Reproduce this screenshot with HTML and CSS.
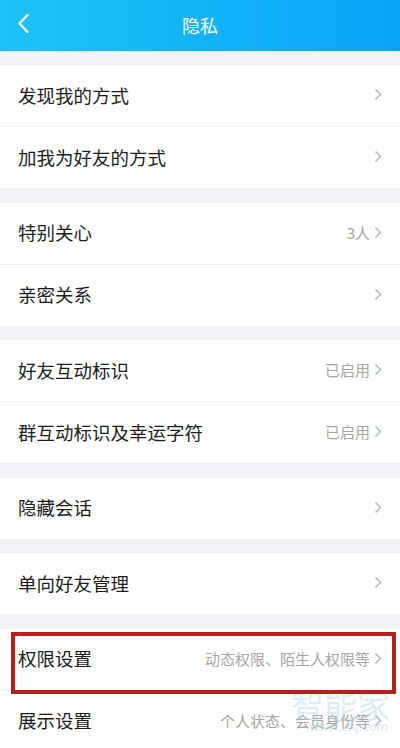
FILE: index.html
```html
<!DOCTYPE html>
<html lang="zh">
<head>
<meta charset="utf-8">
<link rel="stylesheet" href="styles.css">
</head>
<body>
<div class="page">
  <header class="topbar">
    <svg class="back" width="13" height="21" viewBox="0 0 13 21"><path d="M10.5 2 L2.5 10.5 L10.5 19" fill="none" stroke="#fff" stroke-width="2.2" stroke-linecap="round" stroke-linejoin="round"/></svg>
    <div class="title">隐私</div>
  </header>

  <section class="group first">
    <div class="row"><span class="label">发现我的方式</span><span class="right"><svg class="chev" width="8" height="13" viewBox="0 0 8 13"><path d="M1.5 1.5 L6.5 6.5 L1.5 11.5" fill="none" stroke="#b8b8b8" stroke-width="1.5"/></svg></span></div>
    <div class="row"><span class="label">加我为好友的方式</span><span class="right"><svg class="chev" width="8" height="13" viewBox="0 0 8 13"><path d="M1.5 1.5 L6.5 6.5 L1.5 11.5" fill="none" stroke="#b8b8b8" stroke-width="1.5"/></svg></span></div>
  </section>

  <section class="group">
    <div class="row"><span class="label">特别关心</span><span class="right">3人<svg class="chev" width="8" height="13" viewBox="0 0 8 13"><path d="M1.5 1.5 L6.5 6.5 L1.5 11.5" fill="none" stroke="#b8b8b8" stroke-width="1.5"/></svg></span></div>
    <div class="row"><span class="label">亲密关系</span><span class="right"><svg class="chev" width="8" height="13" viewBox="0 0 8 13"><path d="M1.5 1.5 L6.5 6.5 L1.5 11.5" fill="none" stroke="#b8b8b8" stroke-width="1.5"/></svg></span></div>
  </section>

  <section class="group">
    <div class="row"><span class="label">好友互动标识</span><span class="right">已启用<svg class="chev" width="8" height="13" viewBox="0 0 8 13"><path d="M1.5 1.5 L6.5 6.5 L1.5 11.5" fill="none" stroke="#b8b8b8" stroke-width="1.5"/></svg></span></div>
    <div class="row"><span class="label">群互动标识及幸运字符</span><span class="right">已启用<svg class="chev" width="8" height="13" viewBox="0 0 8 13"><path d="M1.5 1.5 L6.5 6.5 L1.5 11.5" fill="none" stroke="#b8b8b8" stroke-width="1.5"/></svg></span></div>
  </section>

  <section class="group">
    <div class="row"><span class="label">隐藏会话</span><span class="right"><svg class="chev" width="8" height="13" viewBox="0 0 8 13"><path d="M1.5 1.5 L6.5 6.5 L1.5 11.5" fill="none" stroke="#b8b8b8" stroke-width="1.5"/></svg></span></div>
  </section>

  <section class="group">
    <div class="row"><span class="label">单向好友管理</span><span class="right"><svg class="chev" width="8" height="13" viewBox="0 0 8 13"><path d="M1.5 1.5 L6.5 6.5 L1.5 11.5" fill="none" stroke="#b8b8b8" stroke-width="1.5"/></svg></span></div>
  </section>

  <section class="group">
    <div class="row highlighted"><span class="label">权限设置</span><span class="right">动态权限、陌生人权限等<svg class="chev" width="8" height="13" viewBox="0 0 8 13"><path d="M1.5 1.5 L6.5 6.5 L1.5 11.5" fill="none" stroke="#b8b8b8" stroke-width="1.5"/></svg></span></div>
    <div class="row"><span class="label">展示设置</span><span class="right">个人状态、会员身份等<svg class="chev" width="8" height="13" viewBox="0 0 8 13"><path d="M1.5 1.5 L6.5 6.5 L1.5 11.5" fill="none" stroke="#b8b8b8" stroke-width="1.5"/></svg></span></div>
  </section>

  <div class="watermark" aria-hidden="true">
    <div class="wm-big">智能家</div>
    <div class="wm-small">www.znj.com</div>
  </div>
</div>
</body>
</html>
```

FILE: styles.css
```css
* { box-sizing: border-box; }
html, body { margin: 0; padding: 0; }
body {
  width: 400px;
  height: 748px;
  overflow: hidden;
  background: #f2f3f7;
  font-family: "Noto Sans CJK SC", "Noto Sans", sans-serif;
}
.page {
  position: relative;
  width: 400px;
  height: 748px;
}
.topbar {
  height: 51px;
  background: linear-gradient(90deg, #1fc2f6 0%, #12b2f8 55%, #0aa5fa 100%);
  display: flex;
  align-items: center;
  justify-content: center;
  position: relative;
}
.back {
  position: absolute;
  left: 17px;
  top: 13px;
}
.title {
  color: #fff;
  font-size: 18px;
  line-height: 1;
  padding-bottom: 1px;
}
.group {
  margin-top: 14.5px;
  background: #fff;
}
.group.first {
  margin-top: 14px;
}
.row {
  height: 61px;
  display: flex;
  align-items: center;
  justify-content: space-between;
  padding: 0 18px 2px 18px;
  position: relative;
}
.row + .row {
  border-top: 1px solid #ececec;
  height: 62px;
}
.label {
  font-size: 18.5px;
  color: #1c1c1c;
}
.right {
  display: flex;
  align-items: center;
  gap: 4px;
  font-size: 15px;
  color: #a6a6a6;
}
.chev { display: block; }
.highlighted {
  z-index: 1;
}
.highlighted::after {
  content: "";
  position: absolute;
  left: 11px;
  right: 4px;
  top: 3px;
  bottom: -4px;
  border: 4px solid #b6201b;
  pointer-events: none;
}
.watermark {
  position: absolute;
  right: 10px;
  top: 686px;
  width: 104px;
  height: 54px;
  pointer-events: none;
}
.wm-big {
  font-size: 33px;
  line-height: 36px;
  color: rgba(150, 205, 225, 0.35);
  text-align: right;
}
.wm-small {
  position: absolute;
  right: 2px;
  top: 34px;
  font-family: "DejaVu Sans", sans-serif;
  font-size: 12px;
  color: rgba(150, 200, 220, 0.4);
}
```
